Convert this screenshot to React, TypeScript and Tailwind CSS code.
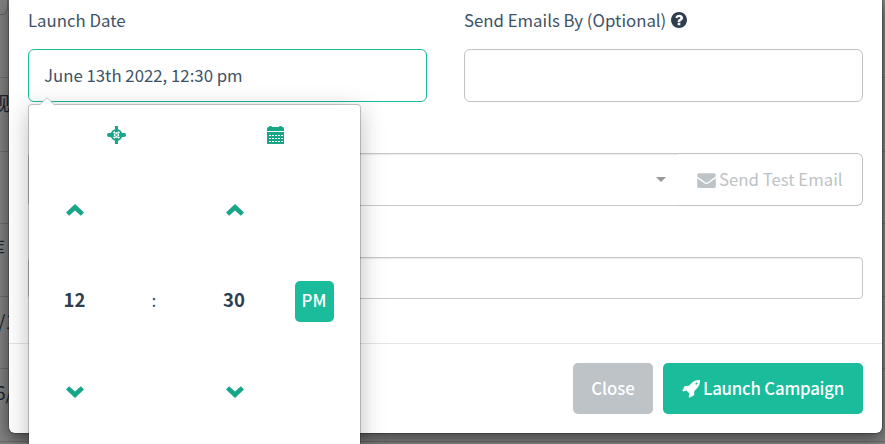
import React from "react";

const FONT = "font-['Noto_Sans_CJK_SC','Noto_Sans',sans-serif]";

function Glyph({ d, w, h, box, className = "" }: { d: string; w: number; h: number; box: string; className?: string }) {
  return (
    <svg width={w} height={h} viewBox={box} fill="currentColor" className={"shrink-0 " + className}>
      <path d={d} />
    </svg>
  );
}

const QUESTION =
  "M1024 1376v-192q0-14-9-23t-23-9h-192q-14 0-23 9t-9 23v192q0 14 9 23t23 9h192q14 0 23-9t9-23zm256-672q0-88-55.5-163t-138.5-116-170-41q-243 0-371 213-15 24 8 42l132 100q7 6 19 6 16 0 25-12 53-68 86-92 34-24 86-24 48 0 85.5 26t37.5 59q0 38-20 61t-68 45q-63 28-115.5 86.5t-52.5 125.5v36q0 14 9 23t23 9h192q14 0 23-9t9-23q0-19 21.5-49.5t54.5-49.5q32-18 49-28.5t46-35 44.5-48 28-60.5 12.5-81zm384 192q0 209-103 385.5t-279.5 279.5-385.5 103-385.5-103-279.5-279.5-103-385.5 103-385.5 279.5-279.5 385.5-103 385.5 103 279.5 279.5 103 385.5z";
const ENVELOPE =
  "M1792 710v794q0 66-47 113t-113 47h-1472q-66 0-113-47t-47-113v-794q44 49 101 87 362 246 497 345 57 42 92.5 65.5t94.5 48 110 24.5h2q51 0 110-24.5t94.5-48 92.5-65.5q170-123 498-345 57-39 100-87zm0-294q0 79-49 151t-122 123q-376 261-468 325-10 7-42.5 31t-54 38.5-52 32.5-57.5 27-50 9h-2q-23 0-50-9t-57.5-27-52-32.5-54-38.5-42.5-31q-91-64-262-182.5t-205-142.5q-62-42-117-115.5t-55-136.5q0-78 41.5-130t118.5-52h1472q65 0 112.5 47t47.5 113z";
const ROCKET =
  "M1440 448q0-40-28-68t-68-28-68 28-28 68 28 68 68 28 68-28 28-68zm224-288q0 249-75.5 430.5t-253.5 360.5q-81 80-195 176l-20 379q-2 16-16 26l-384 224q-7 4-16 4-12 0-23-9l-64-64q-13-14-8-32l85-276-281-281-276 85q-3 1-9 1-14 0-23-9l-64-64q-17-19-5-39l224-384q10-14 26-16l379-20q96-114 176-195 188-187 358-258t431-71q14 0 24 9.5t10 22.5z";

function Crosshair() {
  return (
    <svg width="19" height="18" viewBox="0 0 19 18" className="text-[#18a689]" fill="none" stroke="currentColor">
      <circle cx="9.5" cy="9" r="5" strokeWidth="2" />
      <path d="M9.5 0v6.5M9.5 11.5v6.5" strokeWidth="3" />
      <path d="M2 9h4M13 9h4" strokeWidth="4" strokeLinecap="round" />
      <circle cx="9.5" cy="9" r="2.6" fill="#fff" stroke="none" />
      <path d="M7.5 7l4 4M11.5 7l-4 4" strokeWidth="1" />
    </svg>
  );
}

function Calendar() {
  return (
    <svg width="17" height="18" viewBox="0 0 17 18" fill="#18a689">
      <path d="M0 5V2.5Q0 1 1.5 1H2Q2 0 3 0H4Q5 0 5 1H12Q12 0 13 0H14Q15 0 15 1H15.5Q17 1 17 2.5V5Z" />
      <path d="M0 6H17V18H0Z" />
      <path d="M2 9.5H16M2 12.5H16M2 15.5H16" stroke="#fff" strokeWidth="1" strokeDasharray="2 1" />
    </svg>
  );
}

function Chevron({ down = false }: { down?: boolean }) {
  return (
    <svg width="18" height="12" viewBox="0 0 18 12" className={down ? "rotate-180" : ""}>
      <path d="M9 0L18 8.6L14.9 11.8L9 6.5L3.1 11.8L0 8.6Z" fill="#18a689" />
    </svg>
  );
}

// The part of each table row left uncovered by the dialog.
const rows = [
  { text: "", shift: "" },
  { text: "规", shift: "-ml-[9px]" },
  { text: "", shift: "" },
  { text: "库", shift: "-ml-[14px]" },
  { text: "/1", shift: "-ml-[2px]" },
  { text: "6/", shift: "-ml-[5px]" },
];

function PageBehind() {
  return (
    <div className="absolute inset-0 overflow-hidden bg-[#808080] text-[19px] text-[#1a2530]">
      <div className="-ml-6 -mt-4 h-[31px] w-8 rounded-[6px] border border-[#5e6163]" />
      <div className="-mt-[9px]">
        {rows.map((r, i) => (
          <div
            key={i}
            className={
              "flex border-b border-[#6c6c6c] " +
              (i === 0 ? "h-[72px]" : i === 1 ? "h-[74px] pt-[10px]" : i % 2 === 0 ? "h-[72px] pt-[9px]" : "h-[73px] pt-[8px]")
            }
          >
            <span className={"h-[30px] whitespace-nowrap leading-[30px] " + r.shift}>{r.text}</span>
          </div>
        ))}
      </div>
    </div>
  );
}

function TimePicker() {
  return (
    <div className="absolute left-[28px] top-[104px] h-[360px] w-[333px] rounded-[4px] border border-black/20 bg-white bg-clip-padding shadow-[0_6px_24px_rgba(0,0,0,0.25)]">
      <svg width="18" height="9" viewBox="0 0 18 9" className="absolute left-[9px] top-[-8px]">
        <path d="M1 8.5L9 0.8L17 8.5" fill="#fff" stroke="#c4c6c8" />
        <path d="M1 9H17" stroke="#fff" strokeWidth="1" />
      </svg>
      <div className="flex pt-[21px]">
        <div className="flex w-[175px] justify-center">
          <Crosshair />
        </div>
        <div className="flex w-[143px] justify-center">
          <Calendar />
        </div>
      </div>
      <div className="grid grid-cols-[92px_68px_92px_68px] justify-items-center pt-[60px]">
        <Chevron />
        <span />
        <Chevron />
      </div>
      <div className="mt-[65px] grid h-[41px] grid-cols-[91px_68px_92px_68px] items-center justify-items-center text-[18.5px] text-[#2c3e50]">
        <b className="-mt-[3px]">12</b>
        <span className="-mt-[3px] text-[16px]">:</span>
        <b className="-mt-[3px]">30</b>
        <span className="flex h-[41px] w-[39px] items-center justify-center rounded-[5px] bg-[#1abc9c] pb-[2px] text-[16.8px] font-medium text-white">
          PM
        </span>
      </div>
      <div className="mt-[64px] grid grid-cols-[92px_68px_92px_68px] justify-items-center">
        <Chevron down />
        <span />
        <Chevron down />
      </div>
    </div>
  );
}

export default function App() {
  return (
    <div className={"relative h-[444px] w-[885px] overflow-hidden text-[16.8px] text-[#3e5266] " + FONT}>
      <PageBehind />
      <div className="relative ml-[9px] h-[433px] w-[873px] rounded-b-[6px] bg-white shadow-[0_5px_15px_rgba(0,0,0,0.5),0_0_0_1px_rgba(0,0,0,0.2)]">
        <div className="flex h-[344px] flex-col border-b border-[#e5e5e5] pl-[19px] pr-[19px]">
          <div className="flex gap-[37px]">
            <div className="w-[399px]">
              <div className="flex h-[49px] items-start pt-[7px] leading-[27px]">Launch Date</div>
              <div className="flex h-[53px] items-center rounded-[6px] border border-[#1abc9c] pl-[15px]">
                June 13th 2022, 12:30 pm
              </div>
            </div>
            <div className="w-[399px]">
              <div className="flex h-[49px] items-start pt-[7px] leading-[27px]">
                Send Emails By (Optional)
                <Glyph d={QUESTION} w={16} h={16} box="128 128 1536 1536" className="ml-[5px] mt-[5px] text-[#2c3e50]" />
              </div>
              <div className="h-[53px] rounded-[6px] border border-[#bdc3c7]" />
            </div>
          </div>
          <div className="mt-[51px] flex h-[53px]">
            <div className="flex flex-1 items-center justify-end rounded-l-[4px] border border-r-0 border-[#c7c9ca] pr-[12px] shadow-[inset_0_1px_1px_rgba(0,0,0,0.08)]">
              <span className="border-x-[5px] border-t-[5px] border-x-transparent border-t-[#999]" />
            </div>
            <div className="flex w-[185px] items-center rounded-r-[6px] border border-l-0 border-[#bdc3c7] pl-[19px] text-[#bdc3c7]">
              <Glyph d={ENVELOPE} w={19} h={16} box="0 128 1792 1536" className="mr-[3px]" />
              Send Test Email
            </div>
          </div>
          <div className="mt-[51px] h-[42px] rounded-[4px] border border-[#c7c9ca] shadow-[inset_0_1px_1px_rgba(0,0,0,0.08)]" />
        </div>
        <div className="flex justify-end gap-[10px] pr-[19px] pt-[19px] font-medium text-white">
          <div className="flex h-[51px] w-[80px] items-center justify-center rounded-[5px] bg-[#bdc3c7]">Close</div>
          <div className="flex h-[51px] w-[200px] items-center justify-center rounded-[5px] bg-[#1abc9c] tracking-[-0.2px]">
            <Glyph d={ROCKET} w={18} h={18} box="0 128 1664 1664" className="mr-[3px]" />
            Launch Campaign
          </div>
        </div>
      </div>
      <TimePicker />
    </div>
  );
}
